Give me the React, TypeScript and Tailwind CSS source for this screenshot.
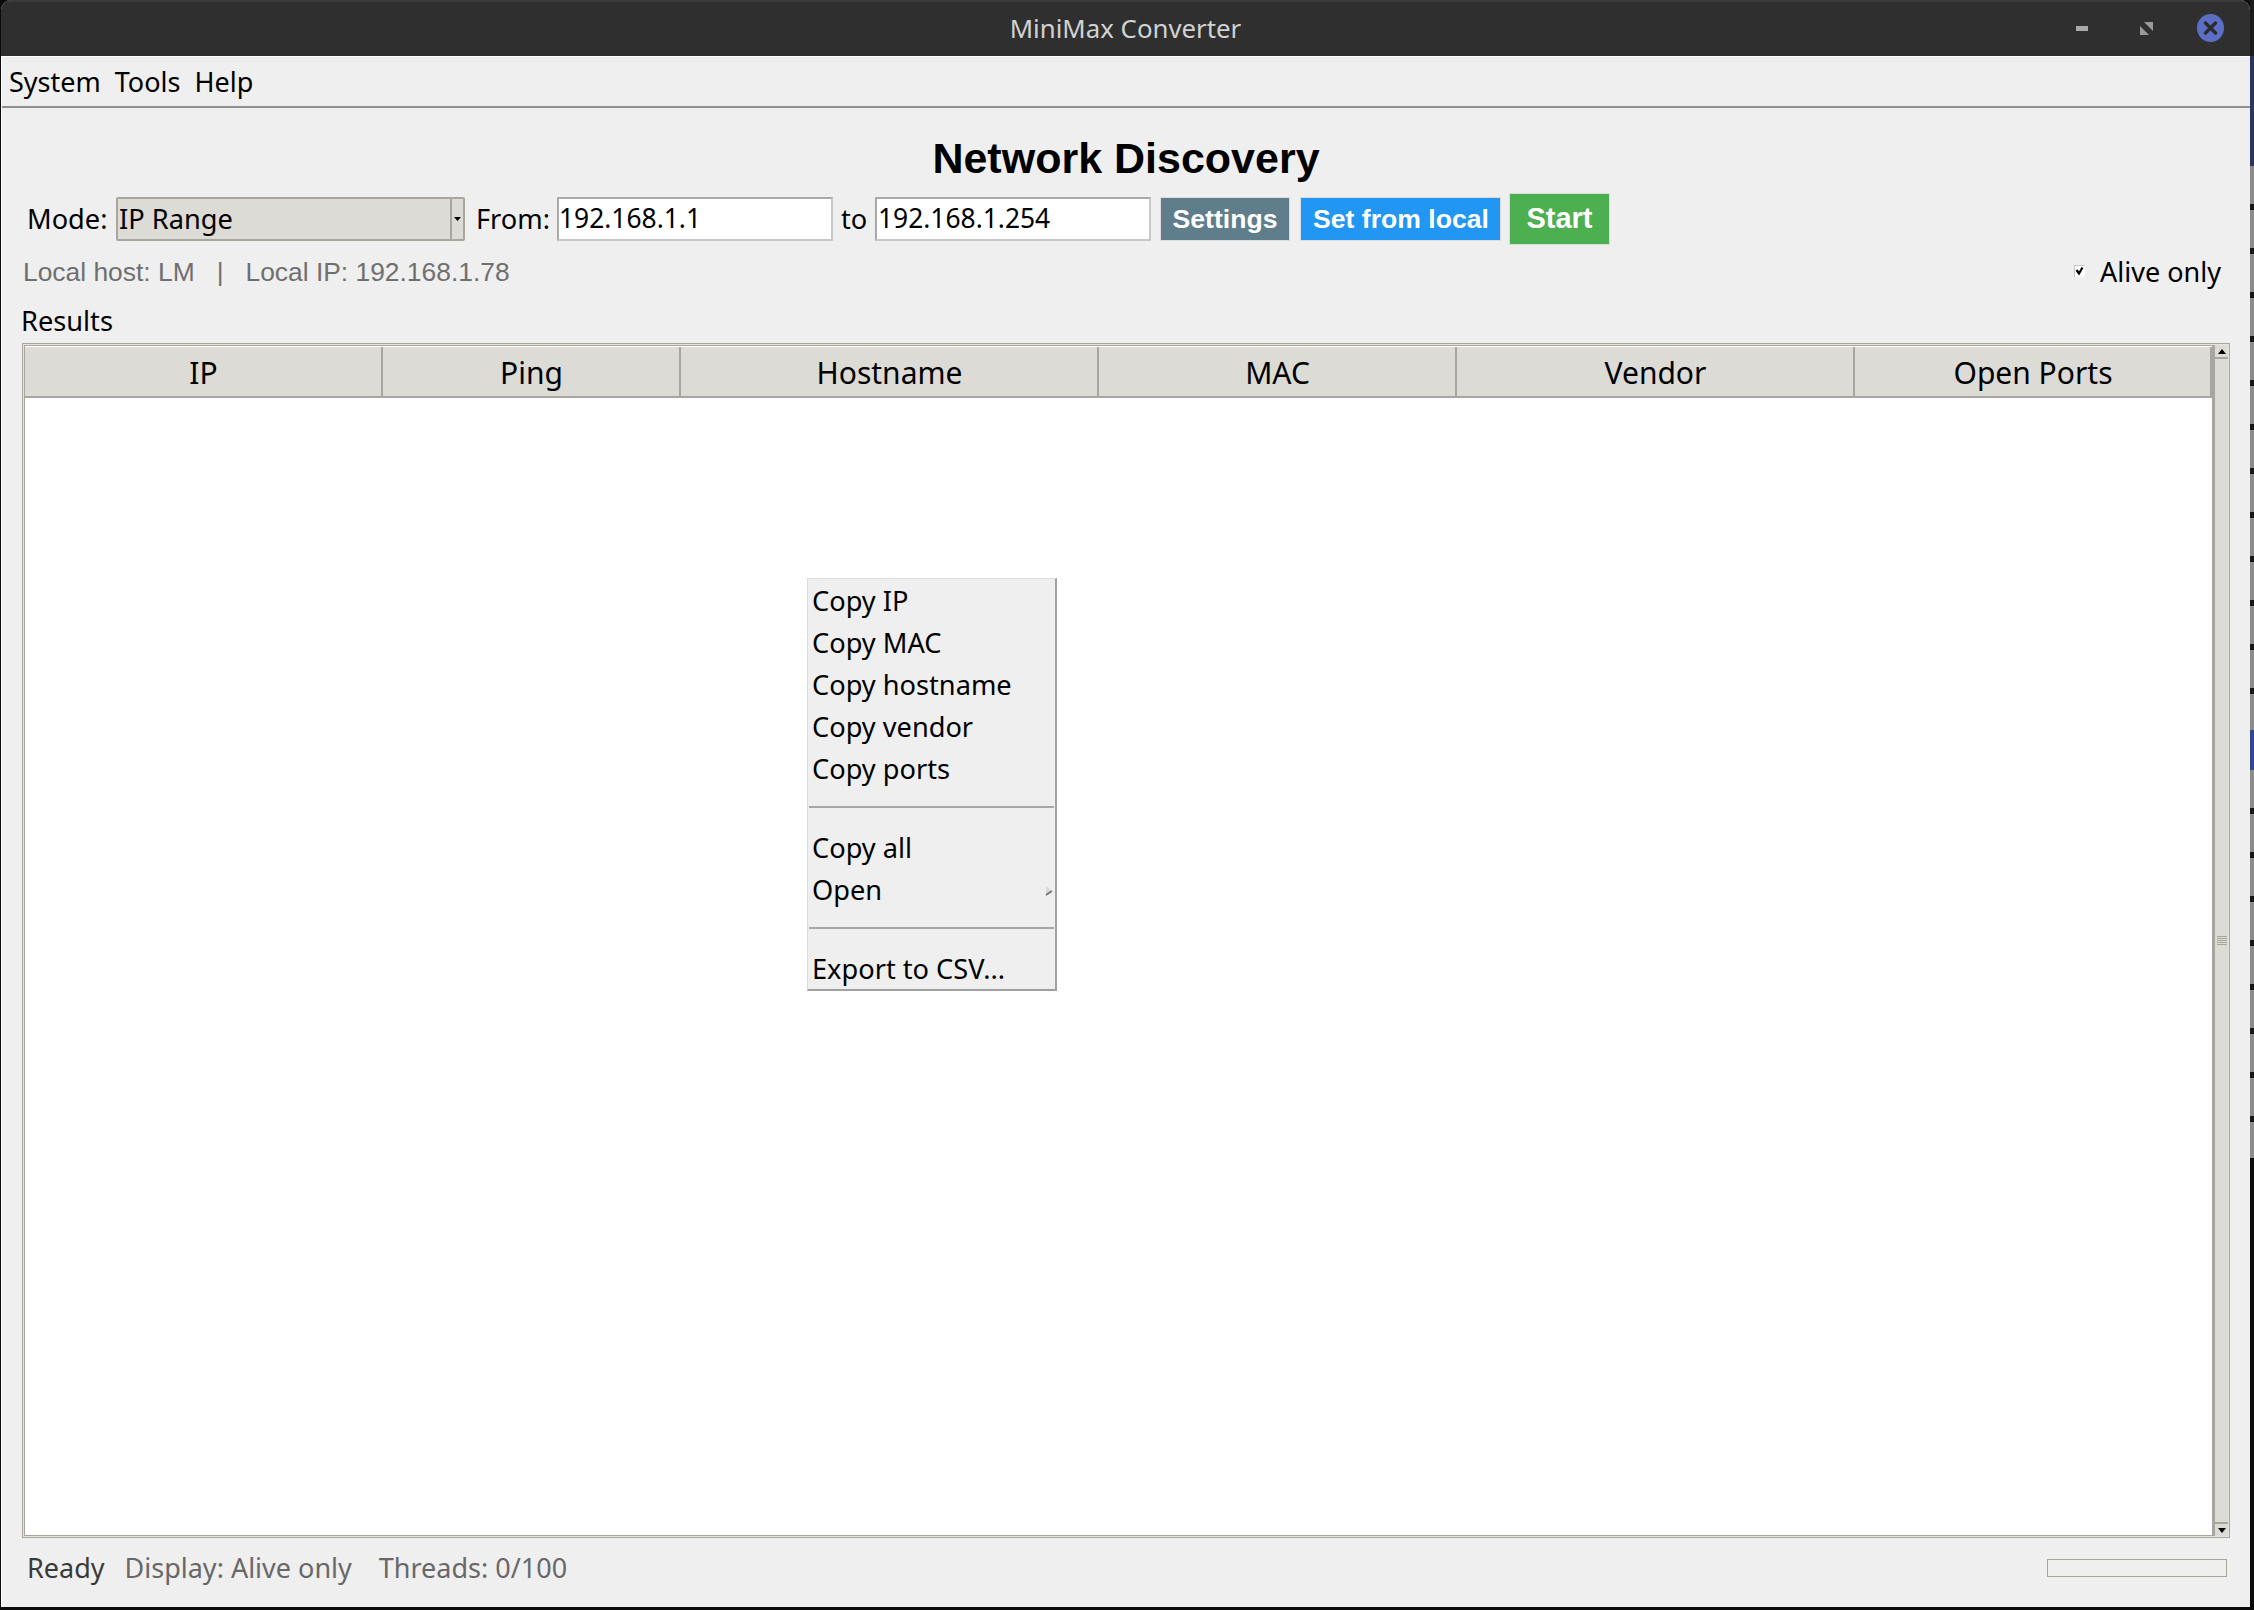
const noto = "font-['Noto_Sans',sans-serif]";

const columns = [
  { label: "IP", width: "w-[358px]" },
  { label: "Ping", width: "w-[298px]" },
  { label: "Hostname", width: "w-[418px]" },
  { label: "MAC", width: "w-[358px]" },
  { label: "Vendor", width: "w-[398px]" },
  { label: "Open Ports", width: "w-[357px]" },
];

function MenuItem({ children, arrow }: { children: string; arrow?: boolean }) {
  return (
    <div className="relative h-[42px] pl-[4px] flex items-center text-[27.2px] text-black">
      {children}
      {arrow && (
        <svg className="absolute right-[2px] top-[17px]" width="8" height="10" viewBox="0 0 8 10">
          <path d="M1 0 L7 5 L1 9 Z" fill="#d8d8d8" />
          <path d="M1 9 L7 5" stroke="#707070" strokeWidth="1.6" />
        </svg>
      )}
    </div>
  );
}

function Separator() {
  return <div className="h-[2px] mx-[1px] bg-[#a6a6a6]" />;
}

export default function App() {
  return (
    <div className={`w-[2254px] h-[1610px] bg-[#0b0b0b] flex pl-[1px] pb-[3px] overflow-hidden ${noto}`}>
      <div className="relative flex-1 flex flex-col bg-[#efefef] rounded-t-[10px] overflow-hidden">
        {/* Title bar */}
        <div className="h-[56px] shrink-0 grid grid-cols-[1fr_auto_1fr] items-center bg-[#2f2f2f] border-t-[2px] border-[#3b3b3b]">
          <div />
          <div className="text-[25.8px] text-[#d2d2d2] pb-[2px]">MiniMax Converter</div>
          <div className="flex items-center justify-end pr-[26px] pb-[2px]">
            <svg width="12" height="5" viewBox="0 0 12 5" className="mr-[52px]">
              <rect width="12" height="5" fill="#a9a9a9" />
            </svg>
            <svg width="13" height="13" viewBox="0 0 13 13" className="mr-[44px]">
              <path d="M0 4 L9 13 H0 Z" fill="#9a9a9a" />
              <path d="M4 0 H13 V9 Z" fill="#9a9a9a" />
            </svg>
            <svg width="27" height="28" viewBox="0 0 27 28">
              <ellipse cx="13.5" cy="14" rx="13.5" ry="14" fill="#5b6fc4" />
              <path d="M8.5 9 L18.5 19 M18.5 9 L8.5 19" stroke="#2b2b2b" strokeWidth="3.4" strokeLinecap="round" />
            </svg>
          </div>
        </div>

        <div className="flex-1 flex flex-col min-h-0 border-l-[1px] border-t-[1px] border-white">
          {/* Menu bar */}
          <div className="h-[51px] shrink-0 flex items-center gap-[14px] pl-[7px] pt-[1px] border-b-[2px] border-[#8f8f8f] text-[27px] text-black">
            <span>System</span>
            <span>Tools</span>
            <span>Help</span>
          </div>

          {/* Heading */}
          <div className="pt-[26px] h-[85px] shrink-0 text-center font-['Liberation_Sans',sans-serif] font-bold text-[43px] leading-[48px] text-black">
            Network Discovery
          </div>

          {/* Controls */}
          <div className="h-[52px] shrink-0 flex items-center text-[27.2px] text-black">
            <div className="w-[114px] pl-[25px] shrink-0">Mode:</div>
            <div className="w-[349px] h-[44px] shrink-0 flex bg-[#dcdbd6] border-[2px] border-[#a9a69e] rounded-[2px]">
              <div className="flex-1 pl-[1px] flex items-center leading-none">IP Range</div>
              <div className="w-[13px] border-l-[2px] border-[#a9a69e] flex items-center justify-center">
                <svg width="7" height="4" viewBox="0 0 7 4">
                  <path d="M0 0 H7 L3.5 4 Z" fill="#000" />
                </svg>
              </div>
            </div>
            <div className="w-[92px] pl-[11px] shrink-0">From:</div>
            <div className="w-[276px] h-[44px] shrink-0 bg-white border-[2px] border-[#c8c8c8] border-t-[#a9a9a9] border-l-[#a9a9a9] flex items-center text-[26.4px]">
              192.168.1.1
            </div>
            <div className="w-[42px] pl-[8px] shrink-0">to</div>
            <div className="w-[276px] h-[44px] shrink-0 bg-white border-[2px] border-[#c8c8c8] border-t-[#a9a9a9] border-l-[#a9a9a9] flex items-center pl-[1px] text-[26.4px]">
              192.168.1.254
            </div>
            <div className="w-[130px] h-[44px] ml-[9px] pt-[1px] shrink-0 bg-[#607d8b] border-[1px] border-[#dcdcdc] flex items-center justify-center text-white font-bold font-['Liberation_Sans',sans-serif] text-[26.6px]">
              Settings
            </div>
            <div className="w-[201px] h-[44px] ml-[10px] pt-[1px] pl-[1px] shrink-0 bg-[#2196f3] border-[1px] border-[#dcdcdc] flex items-center justify-center text-white font-bold font-['Liberation_Sans',sans-serif] text-[26.6px]">
              Set from local
            </div>
            <div className="w-[101px] h-[52px] ml-[8px] shrink-0 bg-[#4caf50] border-[1px] border-[#dcdcdc] flex items-center justify-center text-white font-bold font-['Liberation_Sans',sans-serif] text-[29px]">
              Start
            </div>
          </div>

          {/* Info row */}
          <div className="h-[54px] shrink-0 flex items-center justify-between pl-[21px] pr-[29px]">
            <div className="font-['Liberation_Sans',sans-serif] text-[26.4px] text-[#6f6f6f] whitespace-pre pt-[1px]">Local host: LM   |   Local IP: 192.168.1.78</div>
            <div className="flex items-center text-[27px] text-black">
              <svg width="11" height="12" viewBox="0 0 11 12" className="mr-[15px] mt-[-2px]">
                <rect width="11" height="12" fill="#ffffff" />
                <path d="M0.5 12 V0.5 H11" fill="none" stroke="#c4c4c4" />
                <path d="M2.5 5 L5 8.5 L8.5 2.5" fill="none" stroke="#000" strokeWidth="2.2" />
              </svg>
              Alive only
            </div>
          </div>

          {/* Results label */}
          <div className="h-[44px] shrink-0 pl-[19px] flex items-center text-[27.2px] text-black">Results</div>

          {/* Table frame */}
          <div className="flex-1 min-h-0 ml-[20px] mr-[20px] flex border-[1px] border-[#a9a69e] bg-[#e4e3de] p-[1px]">
            <div className="flex-1 flex flex-col min-w-0 border-[1px] border-[#a9a69e] bg-white">
              <div className="h-[52px] shrink-0 flex pt-[1px]">
                {columns.map((c) => (
                  <div
                    key={c.label}
                    className={`${c.width} shrink-0 bg-[#dcdbd6] pl-[1px] pt-[1px] border-r-[2px] border-b-[2px] border-[#a9a69e] flex items-center justify-center text-[30px] text-black`}
                  >
                    {c.label}
                  </div>
                ))}
              </div>
              <div className="flex-1" />
            </div>
            {/* Scrollbar */}
            <div className="relative w-[15px] shrink-0 flex flex-col border-l-[2px] border-[#a9a69e] bg-[#dcdbd6]">
              <div className="h-[14px] shrink-0 flex items-center justify-center border-b-[2px] border-[#a9a69e]">
                <svg width="8" height="5" viewBox="0 0 8 5">
                  <path d="M0 5 H8 L4 0 Z" fill="#000" />
                </svg>
              </div>
              <div className="flex-1 flex flex-col items-center justify-center gap-[1px]">
                <div className="w-[10px] h-[1px] bg-[#a9a69e]" />
                <div className="w-[10px] h-[1px] bg-[#a9a69e]" />
                <div className="w-[10px] h-[1px] bg-[#a9a69e]" />
                <div className="w-[10px] h-[1px] bg-[#a9a69e]" />
                <div className="w-[10px] h-[1px] bg-[#a9a69e]" />
              </div>
              <div className="h-[14px] shrink-0 flex items-center justify-center border-t-[2px] border-[#a9a69e]">
                <svg width="8" height="5" viewBox="0 0 8 5">
                  <path d="M0 0 H8 L4 5 Z" fill="#000" />
                </svg>
              </div>
            </div>
          </div>

          {/* Status bar */}
          <div className="h-[69px] shrink-0 flex items-center pl-[25px] pr-[23px] pb-[9px] text-[27px] text-[#686868]">
            <span className="text-[#3a3a3a]">Ready</span>
            <span className="ml-[20px]">Display: Alive only</span>
            <span className="ml-[27px]">Threads: 0/100</span>
            <div className="ml-auto w-[180px] h-[18px] border-[1px] border-[#a9a69e]" />
          </div>
        </div>

        {/* Context menu */}
        <div className="absolute left-[806px] top-[578px] w-[250px] h-[413px] bg-[#efefef] border-t-[1px] border-l-[1px] border-[#dcdcdc] border-r-[2px] border-b-[2px] border-r-[#a0a0a0] border-b-[#a0a0a0] pt-[1px]">
          <MenuItem>Copy IP</MenuItem>
          <MenuItem>Copy MAC</MenuItem>
          <MenuItem>Copy hostname</MenuItem>
          <MenuItem>Copy vendor</MenuItem>
          <MenuItem>Copy ports</MenuItem>
          <div className="h-[16px]" />
          <Separator />
          <div className="h-[19px]" />
          <MenuItem>Copy all</MenuItem>
          <MenuItem arrow>Open</MenuItem>
          <div className="h-[16px]" />
          <Separator />
          <div className="h-[19px]" />
          <MenuItem>Export to CSV...</MenuItem>
        </div>
      </div>

      {/* Desktop sliver beside the window */}
      <div className="w-[4px] shrink-0 flex flex-col">
        <div className="h-[56px] bg-[#1c1c1c]" />
        <div className="h-[110px] bg-[#2a3560]" />
        <div className="h-[564px] bg-[repeating-linear-gradient(180deg,#8c8c8c_0px,#8c8c8c_38px,#161616_38px,#161616_44px)]" />
        <div className="h-[40px] bg-[#2f4a8c]" />
        <div className="h-[388px] bg-[repeating-linear-gradient(180deg,#8c8c8c_0px,#8c8c8c_38px,#161616_38px,#161616_44px)]" />
      </div>
    </div>
  );
}
